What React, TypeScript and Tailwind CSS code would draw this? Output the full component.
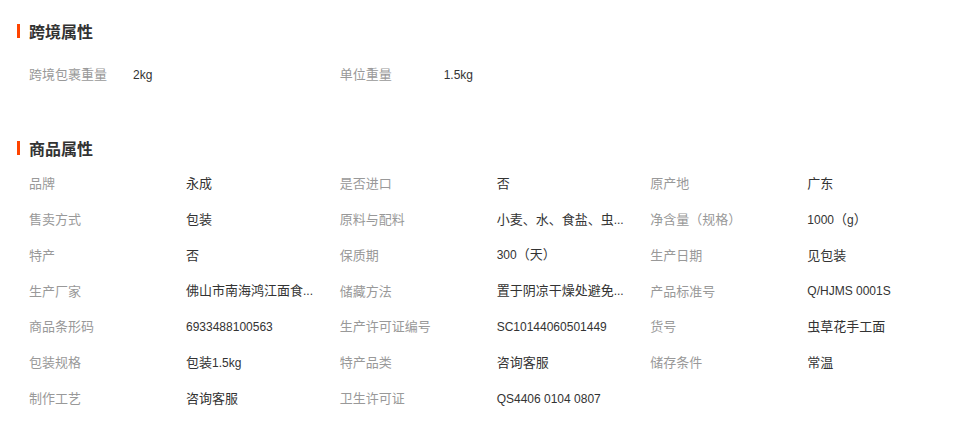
const font = "font-['Noto_Sans_CJK_SC','Noto_Sans',sans-serif]";

const crossBorder = [
  { label: "跨境包裹重量", value: "2kg" },
  { label: "单位重量", value: "1.5kg" },
];

const product = [
  { label: "品牌", value: "永成" },
  { label: "是否进口", value: "否" },
  { label: "原产地", value: "广东" },
  { label: "售卖方式", value: "包装" },
  { label: "原料与配料", value: "小麦、水、食盐、虫..." },
  { label: "净含量（规格）", value: "1000（g）" },
  { label: "特产", value: "否" },
  { label: "保质期", value: "300（天）" },
  { label: "生产日期", value: "见包装" },
  { label: "生产厂家", value: "佛山市南海鸿江面食..." },
  { label: "储藏方法", value: "置于阴凉干燥处避免..." },
  { label: "产品标准号", value: "Q/HJMS 0001S" },
  { label: "商品条形码", value: "6933488100563" },
  { label: "生产许可证编号", value: "SC10144060501449" },
  { label: "货号", value: "虫草花手工面" },
  { label: "包装规格", value: "包装1.5kg" },
  { label: "特产品类", value: "咨询客服" },
  { label: "储存条件", value: "常温" },
  { label: "制作工艺", value: "咨询客服" },
  { label: "卫生许可证", value: "QS4406 0104 0807" },
];

// latin runs are rendered a touch smaller, like the original page's fallback font
function Value({ text }: { text: string }) {
  const parts = text.match(/[\x20-\x7e]+|[^\x20-\x7e]+/g) ?? [];
  return (
    <span className="whitespace-nowrap text-[#333]">
      {parts.map((p, i) =>
        /^[\x20-\x7e]+$/.test(p) ? (
          <span key={i} className="font-['Liberation_Sans',sans-serif] text-[12px]">
            {p}
          </span>
        ) : (
          <span key={i}>{p}</span>
        )
      )}
    </span>
  );
}

function Heading({ title }: { title: string }) {
  return (
    <div className="flex items-center h-5 pl-[17px]">
      <span className="w-[3px] h-[14px] bg-[#ff4400]" />
      <h3 className="ml-[9px] text-[16px] leading-5 font-bold text-[#333]">{title}</h3>
    </div>
  );
}

export default function App() {
  return (
    <main className={`w-[970px] min-h-[433px] bg-white pt-[21px] ${font}`}>
      {/* 跨境属性 */}
      <Heading title="跨境属性" />
      <div className="grid grid-cols-3 w-[932px] ml-[29px] mt-[15px] text-[13px]">
        {crossBorder.map((item) => (
          <div key={item.label} className="flex items-center h-9">
            <span className="w-[104px] text-[#999]">{item.label}</span>
            <Value text={item.value} />
          </div>
        ))}
      </div>

      {/* 商品属性 */}
      <div className="mt-[46px]">
        <Heading title="商品属性" />
      </div>
      <div className="grid grid-cols-3 w-[932px] ml-[29px] mt-[7px] text-[13px]">
        {product.map((item) => (
          <div key={item.label} className="flex items-center h-[35.8px]">
            <span className="w-[157px] shrink-0 text-[#999]">{item.label}</span>
            <Value text={item.value} />
          </div>
        ))}
      </div>
    </main>
  );
}
